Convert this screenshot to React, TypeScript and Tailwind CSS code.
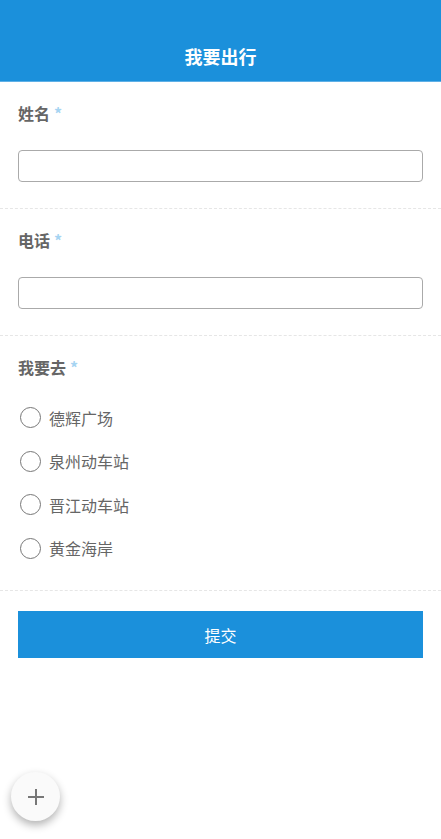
import { useState } from "react";

const places = ["德辉广场", "泉州动车站", "晋江动车站", "黄金海岸"];

function Label({ text }: { text: string }) {
  return (
    <div className="flex h-[24px] items-center text-[16px] font-bold leading-[24px] text-[#666]">
      <span>{text}</span>
      <span className="ml-[4px] text-[#a6d4f2]">*</span>
    </div>
  );
}

export default function App() {
  const [place, setPlace] = useState("");

  return (
    <div
      className="relative min-h-[839px] bg-white"
      style={{ fontFamily: '"Noto Sans CJK SC", "Noto Sans", sans-serif' }}
    >
      <header className="flex h-[82px] items-end justify-center border-b border-[#5fb0e6] bg-[#1b90db] pb-[12px]">
        <h1 className="text-[18px] font-bold leading-[26px] text-white">我要出行</h1>
      </header>

      <section className="border-b border-dashed border-[#e6e6e6] px-[18px] pb-[26px] pt-[19px]">
        <Label text="姓名" />
        <input className="mt-[25px] block h-[32px] w-full rounded-[4px] border border-[#aaa] px-2 text-[15px] outline-none" />
      </section>

      <section className="border-b border-dashed border-[#e6e6e6] px-[18px] pb-[26px] pt-[19px]">
        <Label text="电话" />
        <input className="mt-[25px] block h-[32px] w-full rounded-[4px] border border-[#aaa] px-2 text-[15px] outline-none" />
      </section>

      <section className="border-b border-dashed border-[#e6e6e6] px-[18px] pb-[20px] pt-[19px]">
        <Label text="我要去" />
        <div className="mt-[17px]">
          {places.map((p) => (
            <label
              key={p}
              className="flex h-[43.5px] cursor-pointer items-center"
              onClick={() => setPlace(p)}
            >
              <span className="ml-[2px] flex h-[21px] w-[21px] items-center justify-center rounded-full border border-[#777]">
                {place === p ? <span className="h-[11px] w-[11px] rounded-full bg-[#1b90db]" /> : null}
              </span>
              <span className="ml-[8px] text-[16px] text-[#666]">{p}</span>
            </label>
          ))}
        </div>
      </section>

      <div className="px-[18px] pt-[20px]">
        <button className="flex h-[47px] w-full items-center justify-center bg-[#1b90db] text-[16px] text-white">
          提交
        </button>
      </div>

      <button className="fixed left-[11px] top-[772px] flex h-[49px] w-[49px] items-center justify-center rounded-full bg-[#fafafa] shadow-[0_4px_8px_rgba(0,0,0,0.3)]">
        <svg width="18" height="18" viewBox="0 0 18 18">
          <path d="M9 1v16M1 9h16" stroke="#777" strokeWidth="2" />
        </svg>
      </button>
    </div>
  );
}
